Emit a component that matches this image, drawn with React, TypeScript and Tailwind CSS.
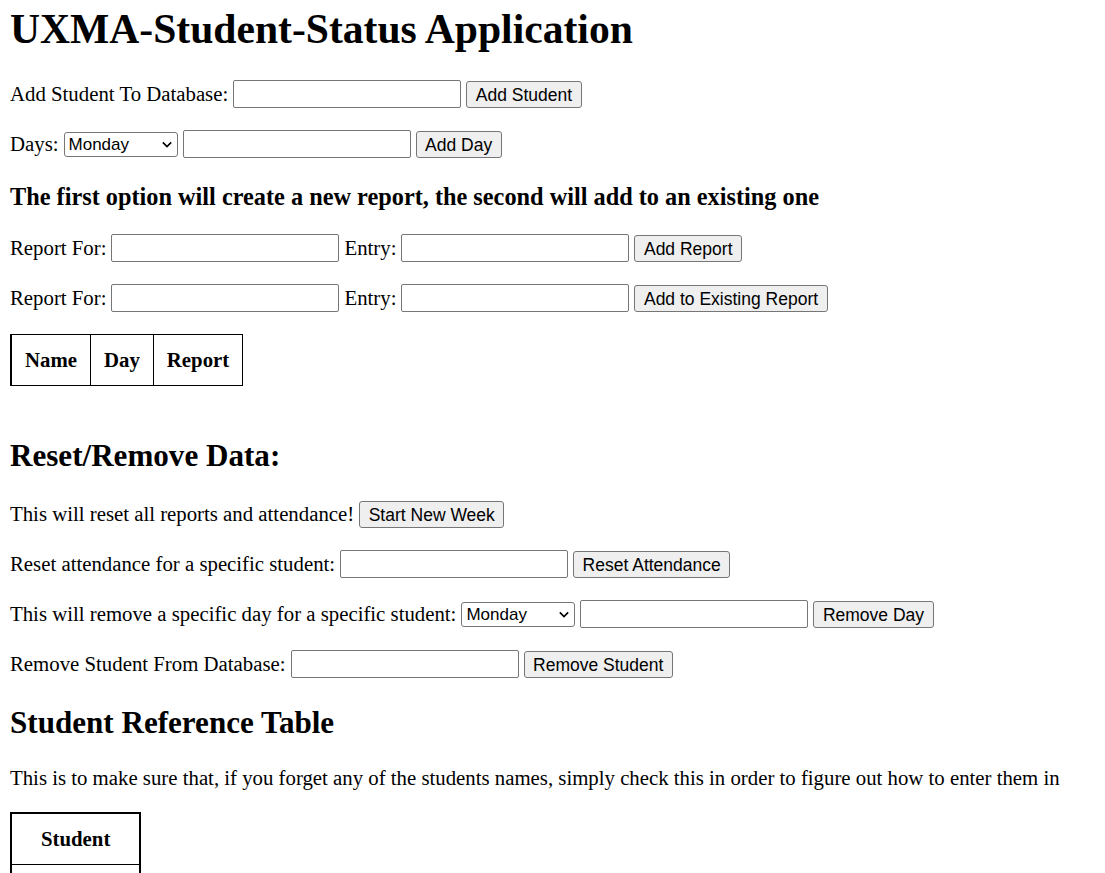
import type { ReactNode } from 'react';

const serif = "font-['Liberation_Serif','Times_New_Roman',serif]";
const sans = "font-['Liberation_Sans',Arial,sans-serif]";

function TextInput({ width = 'w-[228px]' }: { width?: string }) {
  return (
    <input
      type="text"
      className={`${width} h-[28px] rounded-[2px] border border-[#767676] bg-white px-[3px] ${sans} text-[17px] outline-none`}
    />
  );
}

function Button({ children }: { children: ReactNode }) {
  return (
    <button
      type="button"
      className={`h-[27px] rounded-[3px] border border-[#767676] bg-[#efefef] px-[8.5px] ${sans} text-[17.5px] leading-[26px] text-black`}
    >
      {children}
    </button>
  );
}

function DaySelect() {
  return (
    <div className="relative h-[25px] w-[114px]">
      <select
        defaultValue="Monday"
        className={`block h-full w-full appearance-none rounded-[3px] border border-[#767676] bg-white py-0 pl-[4px] pr-[20px] ${sans} text-[17px] leading-[23px] text-black outline-none`}
      >
        {['Monday', 'Tuesday', 'Wednesday', 'Thursday', 'Friday'].map((d) => (
          <option key={d}>{d}</option>
        ))}
      </select>
      <svg
        viewBox="0 0 12 8"
        className="pointer-events-none absolute right-[6px] top-[9px] h-[7px] w-[10px]"
        fill="none"
        stroke="black"
        strokeWidth="2"
      >
        <path d="M1 1.5 6 6.5 11 1.5" />
      </svg>
    </div>
  );
}

function Row({ className = '', children }: { className?: string; children: ReactNode }) {
  return <div className={`flex h-[30px] items-center gap-[5px] ${className}`}>{children}</div>;
}

export default function App() {
  return (
    <div className={`flex flex-col px-[10px] pt-[6px] ${serif} text-[20.8px] text-black`}>
      <h1 className="text-[41.6px] font-bold leading-[46px]">UXMA-Student-Status Application</h1>

      <Row className="mt-[27px]">
        <span>Add Student To Database:</span>
        <TextInput />
        <Button>Add Student</Button>
      </Row>

      <Row className="mt-[20px]">
        <span>Days:</span>
        <DaySelect />
        <TextInput />
        <Button>Add Day</Button>
      </Row>

      <h3 className="mt-[24px] text-[24.3px] font-bold leading-[27px]">
        The first option will create a new report, the second will add to an existing one
      </h3>

      <Row className="mt-[23px]">
        <span>Report For:</span>
        <TextInput />
        <span>Entry:</span>
        <TextInput />
        <Button>Add Report</Button>
      </Row>

      <Row className="mt-[20px]">
        <span>Report For:</span>
        <TextInput />
        <span>Entry:</span>
        <TextInput />
        <Button>Add to Existing Report</Button>
      </Row>

      <table className="mt-[21px] w-fit border-collapse border-y border-r border-l-2 border-black">
        <thead>
          <tr>
            {['Name', 'Day', 'Report'].map((h) => (
              <th key={h} className="h-[51px] border-l border-black px-[13px] text-center font-bold first:border-l-0">
                {h}
              </th>
            ))}
          </tr>
        </thead>
      </table>

      <h2 className="mt-[53px] text-[31.1px] font-bold leading-[34px]">Reset/Remove Data:</h2>

      <Row className="mt-[26px]">
        <span>This will reset all reports and attendance!</span>
        <Button>Start New Week</Button>
      </Row>

      <Row className="mt-[20px]">
        <span>Reset attendance for a specific student:</span>
        <TextInput />
        <Button>Reset Attendance</Button>
      </Row>

      <Row className="mt-[20px]">
        <span>This will remove a specific day for a specific student:</span>
        <DaySelect />
        <TextInput />
        <Button>Remove Day</Button>
      </Row>

      <Row className="mt-[20px]">
        <span>Remove Student From Database:</span>
        <TextInput />
        <Button>Remove Student</Button>
      </Row>

      <h2 className="mt-[27px] text-[31.1px] font-bold leading-[34px]">Student Reference Table</h2>

      <p className="mt-[26px] leading-[23px]">
        This is to make sure that, if you forget any of the students names, simply check this in order to figure out how to enter them in
      </p>

      <table className="mt-[23px] w-fit border-collapse border-2 border-black">
        <thead>
          <tr>
            <th className="h-[51px] border-b border-black px-[29px] text-center font-bold">Student</th>
          </tr>
        </thead>
        <tbody>
          <tr>
            <td className="h-[40px]"></td>
          </tr>
        </tbody>
      </table>
    </div>
  );
}
